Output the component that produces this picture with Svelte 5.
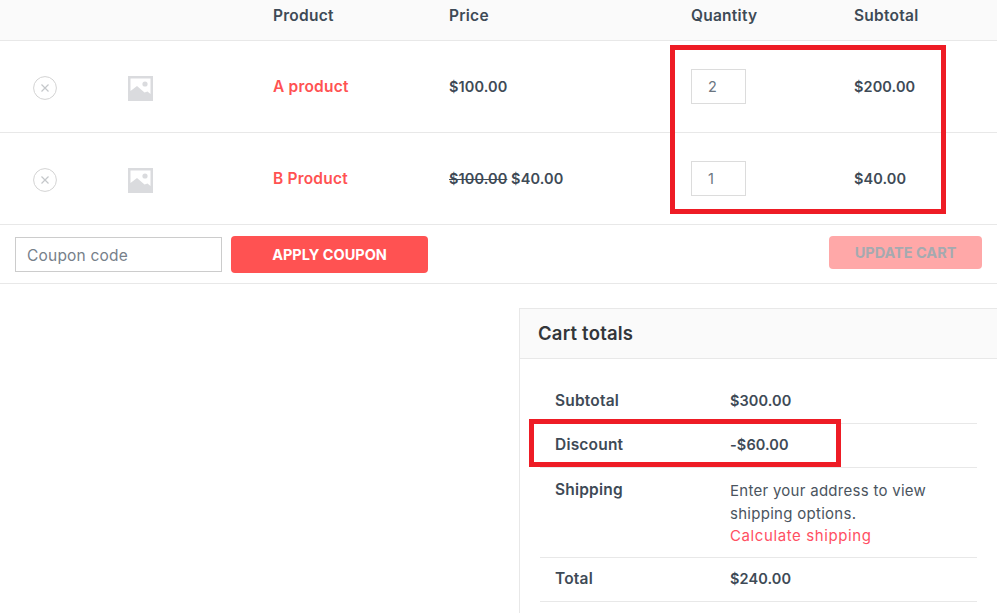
<script>
  const items = [
    { name: 'A product', oldPrice: '', price: '$100.00', qty: 2, subtotal: '$200.00' },
    { name: 'B Product', oldPrice: '$100.00', price: '$40.00', qty: 1, subtotal: '$40.00' }
  ];
</script>

<div class="page">
  <div class="row head">
    <span></span>
    <span></span>
    <span>Product</span>
    <span>Price</span>
    <span>Quantity</span>
    <span>Subtotal</span>
  </div>

  {#each items as item}
    <div class="row item">
      <span class="icon">
        <svg width="24" height="24" viewBox="0 0 24 24" fill="none" stroke="#d3d3d3">
          <circle cx="12" cy="12" r="11.4" />
          <path d="M8.500 8.500l7 7M15.500 8.500l-7 7" stroke="#c4c7ca" stroke-width="1.2" />
        </svg>
      </span>
      <span class="icon">
        <svg width="25" height="25" viewBox="0 0 25 25">
          <rect width="25" height="25" fill="#dadbde" />
          <path d="M2.500 2.500h20v15.500l-3-2.500-3 1-7.500-6.500-6.500 5z" fill="#fff" />
          <circle cx="17" cy="8" r="2.600" fill="#dadbde" />
        </svg>
      </span>
      <a class="name" href="#top">{item.name}</a>
      <span class="money">
        {#if item.oldPrice}<del>{item.oldPrice}</del>{' '}{/if}{item.price}
      </span>
      <span><span class="qty">{item.qty}</span></span>
      <span class="money">{item.subtotal}</span>
    </div>
  {/each}

  <div class="actions">
    <div class="coupon">
      <span class="coupon-input">Coupon code</span>
      <button class="btn">APPLY COUPON</button>
    </div>
    <button class="btn update">UPDATE CART</button>
  </div>

  <div class="totals-wrap">
    <div class="totals">
      <h2>Cart totals</h2>
      <div class="totals-body">
        <div class="line">
          <span class="label">Subtotal</span>
          <span class="money">$300.00</span>
        </div>
        <div class="line">
          <span class="label">Discount</span>
          <span class="money">-$60.00</span>
        </div>
        <div class="line shipping">
          <span class="label">Shipping</span>
          <div class="ship-text">
            Enter your address to view<br />shipping options.<br />
            <a href="#top">Calculate shipping</a>
          </div>
        </div>
        <div class="line">
          <span class="label">Total</span>
          <span class="money">$240.00</span>
        </div>
      </div>
    </div>
  </div>

  <div class="mark mark-qty"></div>
  <div class="mark mark-discount"></div>
</div>

<style>
  :global(body) {
    margin: 0;
    background: #fff;
  }

  .page {
    position: relative;
    height: 613px;
    overflow: hidden;
    font-family: Inter, 'Noto Sans', sans-serif;
    font-size: 14.500px;
    color: #3e4a56;
  }

  .row {
    display: grid;
    grid-template-columns: 95px 145px 176px 242px 163px 1fr;
    align-items: center;
    padding-left: 33px;
    border-bottom: 1px solid #e8e8e8;
  }

  .head {
    box-sizing: border-box;
    height: 41px;
    padding-bottom: 10px;
    background: #fafafa;
    font-size: 15.500px;
    font-weight: 600;
    letter-spacing: 0.25px;
  }

  .item {
    height: 91px;
  }

  .icon {
    display: flex;
    padding-top: 3px;
  }

  .name {
    color: #ff5252;
    font-size: 15.500px;
    font-weight: 600;
    letter-spacing: 0.2px;
    text-decoration: none;
  }

  .money {
    font-weight: 600;
    letter-spacing: 0.1px;
  }

  .qty {
    display: block;
    box-sizing: border-box;
    width: 55px;
    height: 35px;
    padding: 0 16px;
    border: 1px solid #dcdcdc;
    line-height: 33px;
    color: #6b7580;
  }

  .actions {
    display: flex;
    justify-content: space-between;
    align-items: flex-start;
    height: 59px;
    box-sizing: border-box;
    padding: 11px 15px 0;
    border-bottom: 1px solid #e8e8e8;
  }

  .coupon {
    display: flex;
    gap: 9px;
  }

  .coupon-input {
    box-sizing: border-box;
    width: 207px;
    height: 35px;
    margin-top: 1px;
    padding-left: 11px;
    border: 1px solid #cccccc;
    font-size: 15.500px;
    letter-spacing: 0.2px;
    line-height: 35px;
    color: #77808a;
  }

  .btn {
    width: 197px;
    height: 37px;
    padding: 0;
    border: none;
    border-radius: 4px;
    background: #ff5252;
    color: #fff;
    font-family: inherit;
    font-size: 14.500px;
    font-weight: 700;
  }

  .update {
    width: 153px;
    height: 33px;
    background: #ffa8a8;
    color: #a5aab0;
  }

  .totals-wrap {
    display: flex;
    justify-content: flex-end;
    padding-top: 24px;
  }

  .totals {
    box-sizing: border-box;
    width: 478px;
    height: 400px;
    border: 1px solid #e8e8e8;
    border-right: none;
  }

  h2 {
    margin: 0;
    height: 49px;
    padding-left: 18px;
    background: #fafafa;
    border-bottom: 1px solid #e8e8e8;
    font-size: 18.500px;
    font-weight: 600;
    letter-spacing: 0.2px;
    line-height: 49px;
    color: #33363a;
  }

  .totals-body {
    padding: 21px 20px 0;
  }

  .line {
    display: grid;
    grid-template-columns: 175px 1fr;
    align-items: center;
    box-sizing: border-box;
    height: 44px;
    padding-left: 15px;
    padding-bottom: 2px;
    border-bottom: 1px solid #e8e8e8;
  }

  .label {
    font-size: 15.500px;
    font-weight: 600;
    letter-spacing: 0.2px;
  }

  .shipping {
    align-items: start;
    height: 90px;
    padding-top: 12px;
    padding-bottom: 0;
  }

  .ship-text {
    font-size: 15px;
    letter-spacing: 0.28px;
    line-height: 22.500px;
    color: #4a545e;
  }

  .ship-text a {
    color: #ff4f62;
    letter-spacing: 0.6px;
    text-decoration: none;
  }

  .mark {
    position: absolute;
    box-sizing: border-box;
    border: 5px solid #ee1c25;
  }

  .mark-qty {
    left: 670px;
    top: 45px;
    width: 276px;
    height: 169px;
  }

  .mark-discount {
    left: 529px;
    top: 419px;
    width: 312px;
    height: 48px;
  }
</style>
